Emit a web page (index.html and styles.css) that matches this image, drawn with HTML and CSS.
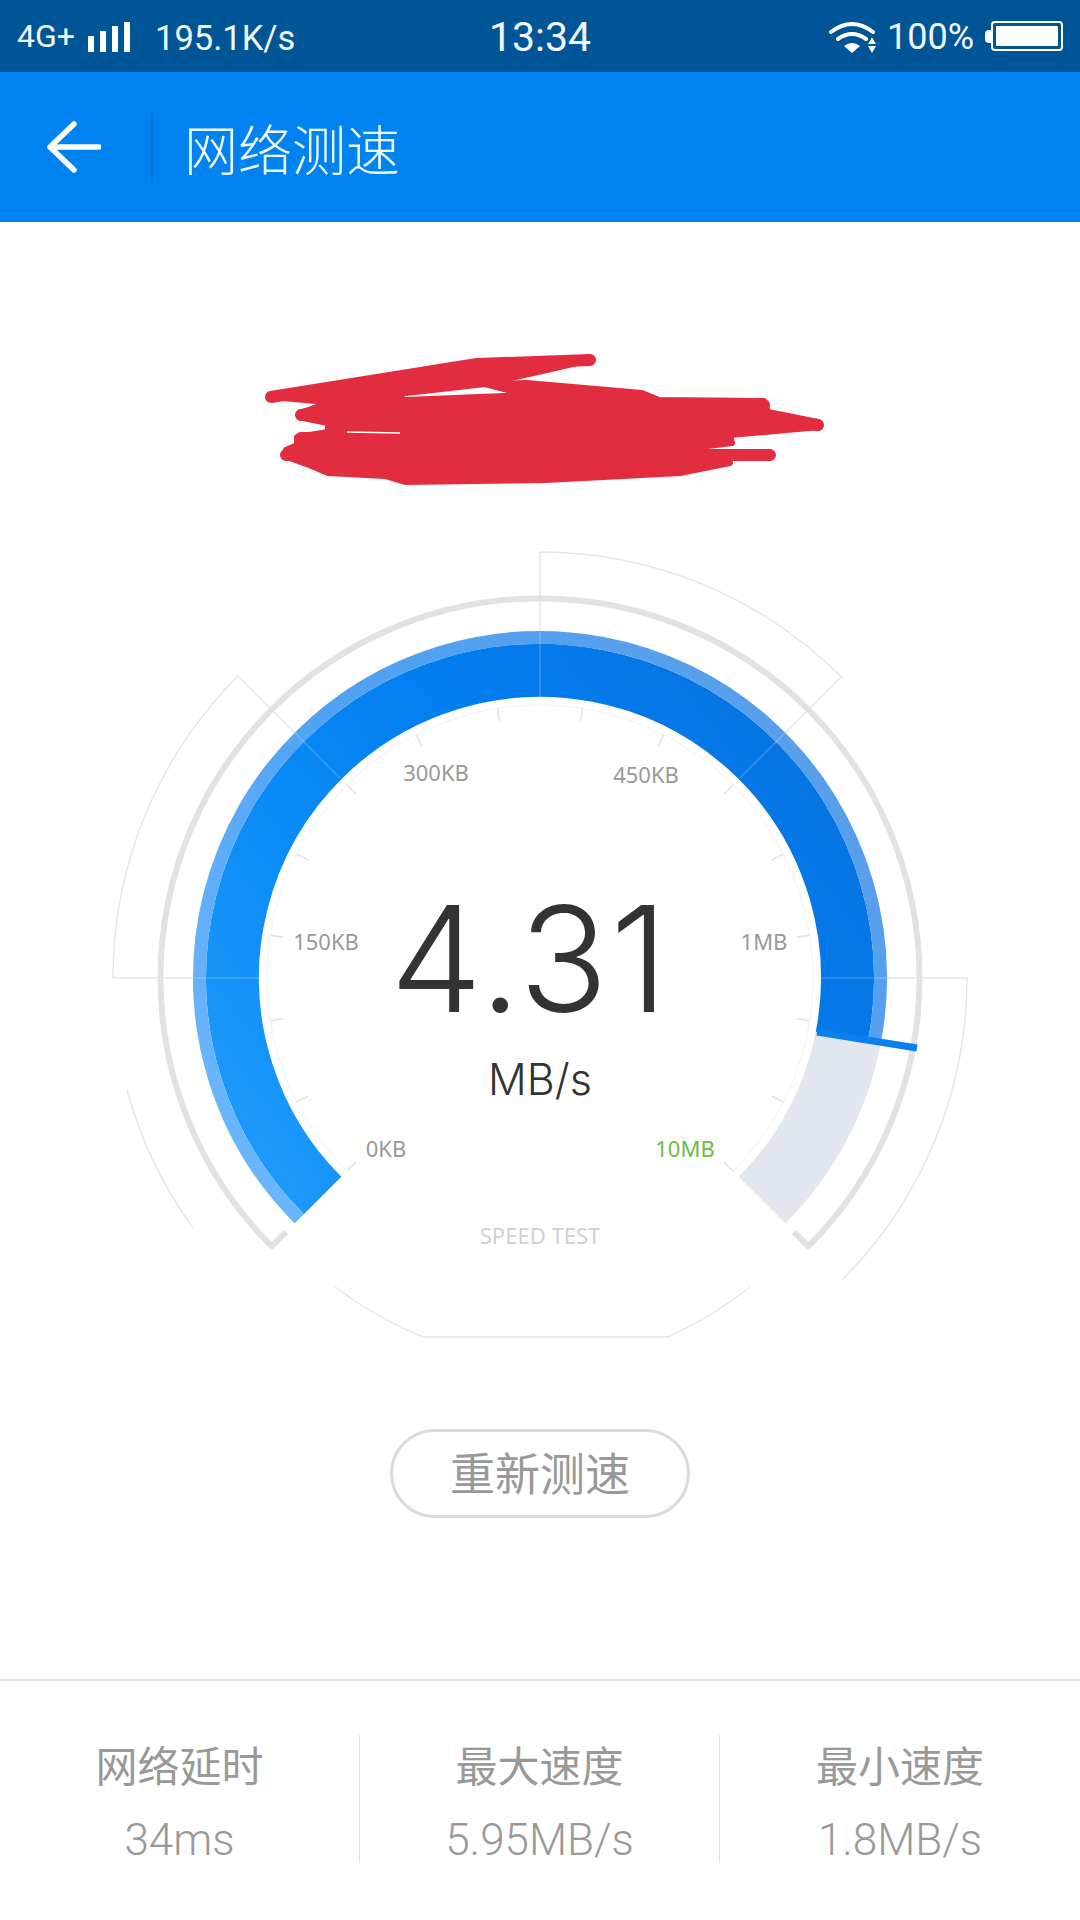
FILE: index.html
```html
<!DOCTYPE html>
<html>
<head>
    <meta charset="utf-8">
    <title>网络测速</title>
    <link rel="stylesheet" href="styles.css">
</head>
<body>
<div class="page">
    <div class="status-bar">
        <div class="status-left">
            <span class="net-type">4G+</span>
            <span class="signal"><i class="bar1"></i><i class="bar2"></i><i class="bar3"></i><i class="bar4"></i></span>
            <span class="net-speed">195.1K/s</span>
        </div>
        <div class="status-time">13:34</div>
        <div class="status-right">
            <svg class="wifi" width="48" height="32" viewBox="0 0 48 32">
                <path d="M2 11Q23 -5 44 11M9 18Q23 8 37 18" fill="none" stroke="#fff" stroke-width="4" stroke-linecap="round"/>
                <path d="M15 25Q23 19 31 25L23 32Z" fill="#fff"/>
                <path d="M43 16.500L47 23H39ZM39 25H47L43 32Z" fill="#fff"/>
            </svg>
            <span class="battery-text">100%</span>
            <span class="battery-nub"></span>
            <span class="battery"><i></i></span>
        </div>
    </div>

    <div class="title-bar">
        <svg class="back" width="54" height="52" viewBox="0 0 54 52">
            <path d="M27 3L3 26L27 49M3 26H52" fill="none" stroke="#fff" stroke-width="5.500" stroke-linecap="round" stroke-linejoin="round"/>
        </svg>
        <span class="title-sep"></span>
        <h1 class="title">网络测速</h1>
    </div>

    <div class="main">
        <svg class="scribble" width="1080" height="140" viewBox="0 350 1080 140">
            <path class="scribble-line" d="M271 397L477 364L590 360"/>
            <path class="scribble-line" d="M286 455H400M650 455H770M650 405H764M750 418L818 425M301 438H500M301 415L400 400"/>
            <path class="scribble-body" d="M271 397L477 364L590 360L538 372L485 384L328 402Z"/>
            <path class="scribble-body" d="M362 407L405 400L527 395L485 384L527 383L642 393L659 400L764 401L768 412L818 422L820 427L730 435L732 443L676 450L730 463L680 473L546 480L405 482L385 476L328 473L309 465L284 456L286 450L297 445L297 437L328 432L328 423L303 418L303 412L330 402Z"/>
            <path class="scribble-gap" d="M347 432L400 433"/>
        </svg>

        <svg class="gauge" width="1080" height="810" viewBox="0 540 1080 810">
            <defs>
                <linearGradient id="bandFill" gradientUnits="userSpaceOnUse" x1="250" y1="1230" x2="850" y2="800">
                    <stop offset="0" stop-color="#219bfb"/>
                    <stop offset="0.35" stop-color="#0a8bf6"/>
                    <stop offset="0.65" stop-color="#027df0"/>
                    <stop offset="1" stop-color="#0774e2"/>
                </linearGradient>
                <linearGradient id="rimFill" gradientUnits="userSpaceOnUse" x1="250" y1="1230" x2="850" y2="800">
                    <stop offset="0" stop-color="#6db8fd"/>
                    <stop offset="0.5" stop-color="#4fa2f3"/>
                    <stop offset="1" stop-color="#589fea"/>
                </linearGradient>
            </defs>

            <g class="frame">
                <path d="M540 697V552A426 426 0 0 1 841.200 676.800L740 778"/>
                <path d="M258 978H113A427 427 0 0 1 238 676L340 778"/>
                <path d="M822 978H967A427 427 0 0 1 842 1280"/>
                <path d="M127 1090A428 428 0 0 0 193 1228"/>
                <path d="M335 1287A400 400 0 0 0 423 1337H668A400 400 0 0 0 750 1287"/>
            </g>

            <path class="ring" d="M286.100 1231.900L271.700 1246.300A379.500 379.500 0 1 1 808.300 1246.300L793.900 1231.900"/>

            <path class="band-empty" d="M848.200 1037.900A314 314 0 0 1 762 1200"/>
            <path class="band-fill" d="M322.600 1195.400A307.500 307.500 0 1 1 841.800 1036.700"/>
            <path class="band-rim" d="M299.200 1218.800A340.500 340.500 0 1 1 874.200 1043"/>

            <g class="frame-over">
                <path d="M540 631V697"/>
                <path d="M294.600 732.600L340 778"/>
                <path d="M785.400 732.600L740 778"/>
                <path d="M193 978H258"/>
                <path d="M822 978H887"/>
            </g>

            <line class="needle" x1="817" y1="1032" x2="917" y2="1048"/>

            <path class="tick-ring" d="M347 1171A273 273 0 1 1 733 1171"/>
            <g class="ticks">
                <line x1="540" y1="705" x2="540" y2="718" transform="rotate(-135 540 978)"/>
                <line x1="540" y1="705" x2="540" y2="718" transform="rotate(-117 540 978)"/>
                <line x1="540" y1="705" x2="540" y2="718" transform="rotate(-99 540 978)"/>
                <line x1="540" y1="705" x2="540" y2="718" transform="rotate(-81 540 978)"/>
                <line x1="540" y1="705" x2="540" y2="718" transform="rotate(-63 540 978)"/>
                <line x1="540" y1="705" x2="540" y2="718" transform="rotate(-45 540 978)"/>
                <line x1="540" y1="705" x2="540" y2="718" transform="rotate(-27 540 978)"/>
                <line x1="540" y1="705" x2="540" y2="718" transform="rotate(-9 540 978)"/>
                <line x1="540" y1="705" x2="540" y2="718" transform="rotate(9 540 978)"/>
                <line x1="540" y1="705" x2="540" y2="718" transform="rotate(27 540 978)"/>
                <line x1="540" y1="705" x2="540" y2="718" transform="rotate(45 540 978)"/>
                <line x1="540" y1="705" x2="540" y2="718" transform="rotate(63 540 978)"/>
                <line x1="540" y1="705" x2="540" y2="718" transform="rotate(81 540 978)"/>
                <line x1="540" y1="705" x2="540" y2="718" transform="rotate(99 540 978)"/>
                <line x1="540" y1="705" x2="540" y2="718" transform="rotate(117 540 978)"/>
                <line x1="540" y1="705" x2="540" y2="718" transform="rotate(135 540 978)"/>
            </g>

            <text class="scale" x="436" y="781">300KB</text>
            <text class="scale" x="646" y="783">450KB</text>
            <text class="scale" x="326" y="950">150KB</text>
            <text class="scale" x="764" y="950">1MB</text>
            <text class="scale" x="386" y="1157">0KB</text>
            <text class="scale scale-max" x="685" y="1157">10MB</text>
            <text class="speed-value" x="530" y="1012">4.31</text>
            <text class="speed-unit" x="540" y="1095">MB/s</text>
            <text class="speed-tag" x="540" y="1244">SPEED TEST</text>
        </svg>

        <div class="retest">重新测速</div>
    </div>

    <div class="stats">
        <div class="stat">
            <div class="stat-label">网络延时</div>
            <div class="stat-value">34ms</div>
        </div>
        <div class="stat">
            <div class="stat-label">最大速度</div>
            <div class="stat-value">5.95MB/s</div>
        </div>
        <div class="stat">
            <div class="stat-label">最小速度</div>
            <div class="stat-value">1.8MB/s</div>
        </div>
    </div>
</div>
</body>
</html>
```

FILE: styles.css
```css
*{
    box-sizing: border-box;
}

body{
    margin: 0;
    background: #fff;
    font-family: Roboto, "Noto Sans CJK SC", sans-serif;
}

.page{
    width: 1080px;
    height: 1920px;
    display: flex;
    flex-direction: column;
    overflow: hidden;
}

/* status bar */
.status-bar{
    height: 72px;
    padding: 0 17px;
    display: grid;
    grid-template-columns: 1fr auto 1fr;
    align-items: center;
    background: #005596;
    color: #f2f8fc;
}

.status-left,
.status-right{
    display: flex;
    align-items: center;
}

.status-right{
    justify-content: flex-end;
}

.net-type{
    font-size: 32px;
    width: 71px;
}

.signal{
    display: flex;
    align-items: flex-end;
    gap: 6px;
    width: 67px;
    height: 30px;
    margin-top: 2px;
}

.signal i{
    display: block;
    width: 6px;
    background: #fff;
}

.signal .bar1{ height: 16px; }
.signal .bar2{ height: 21px; }
.signal .bar3{ height: 26px; }
.signal .bar4{ height: 30px; }

.net-speed{
    font-size: 34.500px;
    margin-top: 3px;
}

.status-time{
    font-size: 41px;
    margin-top: 2px;
}

.wifi{
    margin-right: 10px;
    margin-bottom: -1px;
}

.battery-text{
    font-size: 36px;
    width: 98px;
    margin-top: 2px;
}

.battery-nub{
    width: 6px;
    height: 13px;
    border-radius: 4px 0 0 4px;
    background: #fff;
}

.battery{
    width: 72px;
    height: 30px;
    padding: 3px;
    border: 2px solid #fff;
    border-radius: 4px;
}

.battery i{
    display: block;
    height: 100%;
    background: #fff;
    border-radius: 1px;
}

/* title bar */
.title-bar{
    height: 150px;
    padding-left: 47px;
    display: flex;
    align-items: center;
    background: #0082f0;
}

.title-sep{
    width: 2px;
    height: 67px;
    margin-left: 50px;
    margin-right: 31px;
    background: #0673cf;
}

.title{
    margin: 0;
    font-size: 54px;
    font-weight: 300;
    color: #eef7ff;
    font-family: "Noto Sans CJK SC", sans-serif;
}

/* gauge */
.main{
    flex: 1;
    padding-top: 128px;
}

.scribble,
.gauge{
    display: block;
}

.gauge{
    margin-top: 50px;
}

.scribble-line{
    fill: none;
    stroke: #e22c3f;
    stroke-width: 12;
    stroke-linecap: round;
    stroke-linejoin: round;
}

.scribble-body{
    fill: #e22c3f;
    stroke: #e22c3f;
    stroke-width: 6;
    stroke-linejoin: round;
}

.scribble-gap{
    fill: none;
    stroke: #fff;
    stroke-width: 1.500;
}

.frame path{
    fill: none;
    stroke: #e4e6ea;
    stroke-width: 1.500;
}

.frame-over path{
    fill: none;
    stroke: rgba(255,255,255,.2);
    stroke-width: 1.500;
}

.ring{
    fill: none;
    stroke: #e0e3e6;
    stroke-width: 6;
}

.band-empty{
    fill: none;
    stroke: #e2e7ef;
    stroke-width: 66;
}

.band-fill{
    fill: none;
    stroke: url(#bandFill);
    stroke-width: 53;
}

.band-rim{
    fill: none;
    stroke: url(#rimFill);
    stroke-width: 13;
}

.needle{
    stroke: #0a7fee;
    stroke-width: 7;
}

.tick-ring{
    fill: none;
    stroke: #eff1f4;
    stroke-width: 1;
}

.ticks line{
    stroke: #e2e2e2;
    stroke-width: 1.500;
}

.gauge text{
    text-anchor: middle;
}

.scale{
    font-family: "Noto Sans", sans-serif;
    font-size: 22px;
    fill: #999;
}

.scale-max{
    fill: #6cbb4c;
}

.speed-value{
    font-family: Inter, sans-serif;
    font-size: 147px;
    font-weight: 350;
    letter-spacing: 2px;
    fill: #333;
}

.speed-unit{
    font-family: Inter, sans-serif;
    font-size: 43px;
    font-weight: 300;
    fill: #333;
}

.speed-tag{
    font-family: "Noto Sans", sans-serif;
    font-size: 22px;
    fill: #d0d0d0;
}

.retest{
    width: 300px;
    height: 89px;
    margin: 79px auto 0;
    padding-bottom: 4px;
    border: 3px solid #d9dcdf;
    border-radius: 45px;
    display: flex;
    align-items: center;
    justify-content: center;
    font-family: "Noto Sans CJK SC", sans-serif;
    font-size: 45px;
    color: #999;
}

/* bottom stats */
.stats{
    height: 241px;
    padding-top: 54px;
    border-top: 2px solid #e2e2e2;
    display: grid;
    grid-template-columns: 360px 360px 360px;
    align-items: start;
}

.stat{
    height: 128px;
    text-align: center;
    color: #999;
    border-right: 1px solid #e2e2e2;
}

.stat:last-child{
    border-right: 0;
}

.stat-label{
    font-family: "Noto Sans CJK SC", sans-serif;
    font-size: 42px;
    line-height: 58px;
}

.stat-value{
    margin-top: 22px;
    font-size: 44px;
    font-weight: 300;
    line-height: 50px;
}
```
